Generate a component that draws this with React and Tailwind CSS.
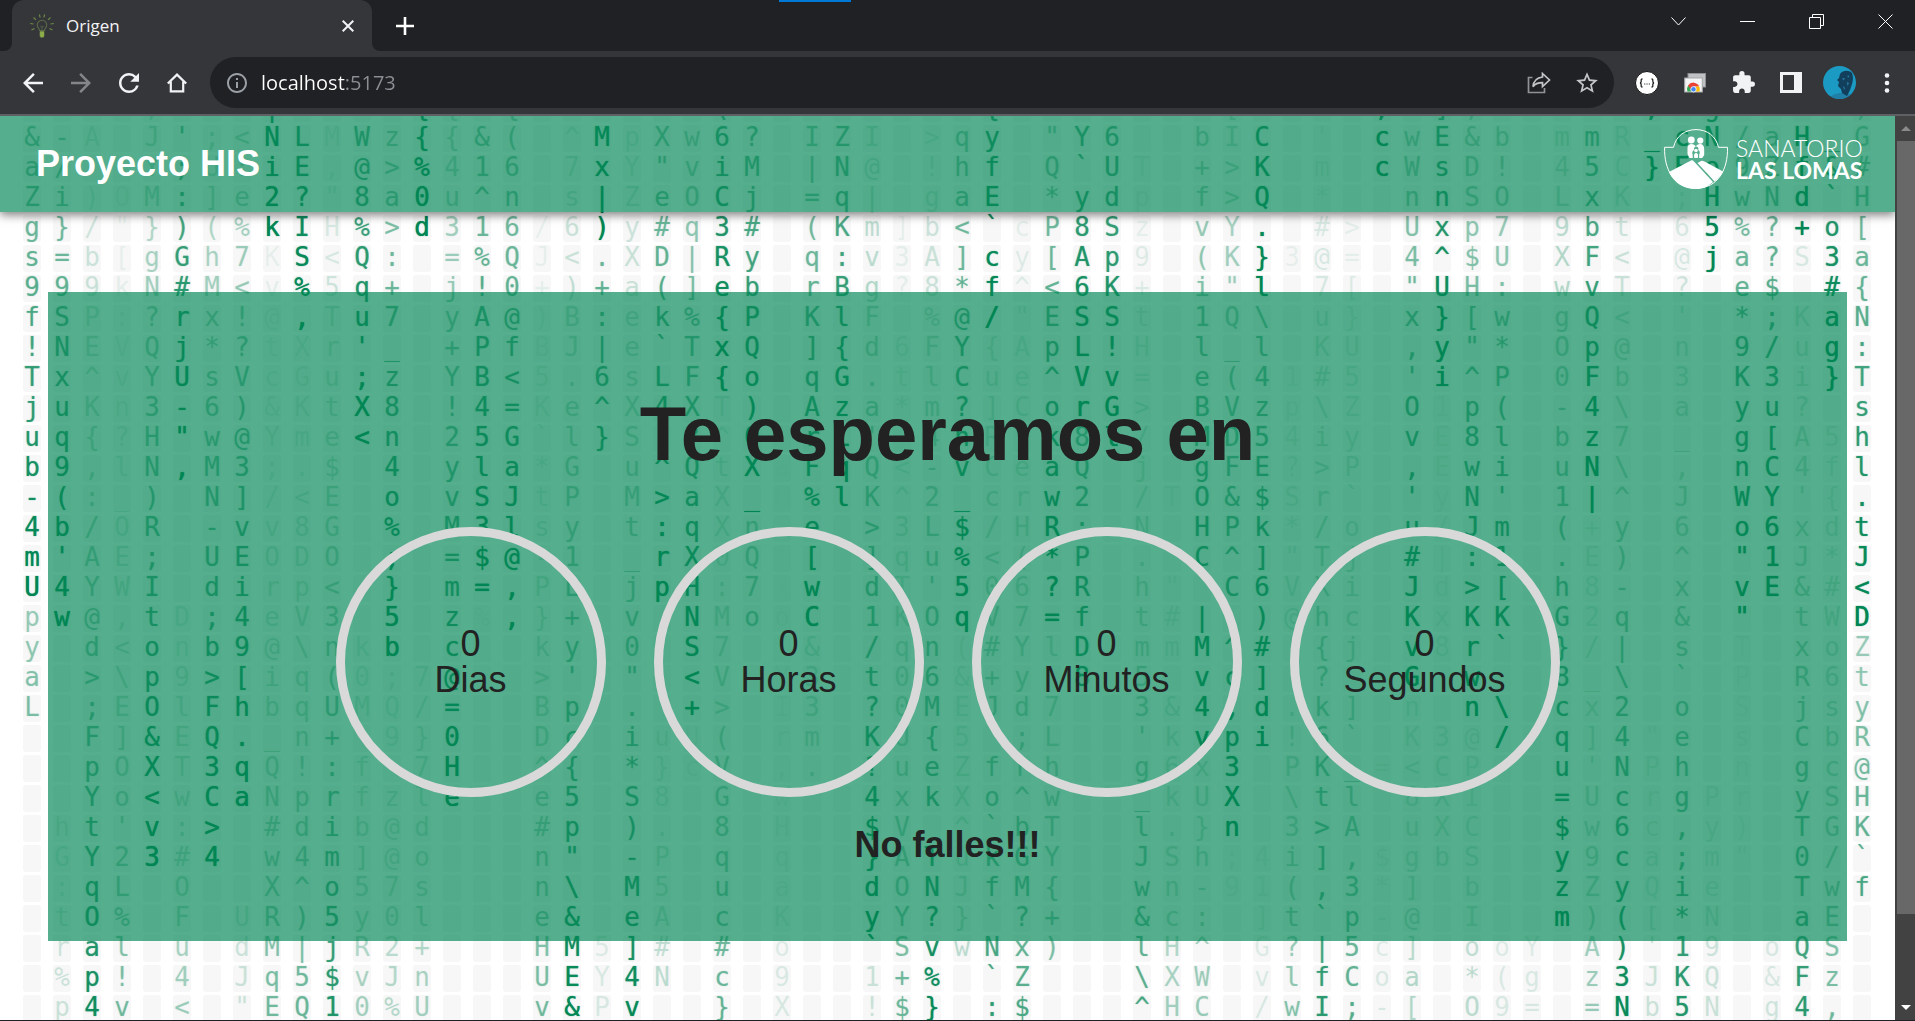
import React from "react";
import { MdArrowBack, MdArrowForward, MdRefresh, MdInfoOutline, MdExtension, MdStarOutline } from "react-icons/md";

// One line per row of the code rain; "~" marks an empty cell.
const RAIN = [
  "~ ~ ~ ~ , ~ ~ ~ | ~ ~ ~ ~ { { ~ { ~ ~ ~ ~ ~ ~ ( ~ ~ ~ ~ ~ ~ ~ ~ { ~ ~ ~ ~ ~ ~ ~ [ ~ ~ ~ ~ , ~ ] , ~ ~ ~ ~ ~ , ~ g ~ ~ ~ ~ )",
  "& - A ~ J ' ; < N L M W z { { & ( ~ ^ M p X w 6 ? ~ I Z I ~ > q y ~ \" Y 6 ~ ~ b I C ~ ' ~ c w E & b ~ m m R _ c N / a H _ G",
  "a / ~ ~ Y ; U : i E , @ > % 4 1 6 ~ 7 x Y \" v i M ~ | N @ ~ ! h f ~ Q ` U T ~ + > K ~ m ~ c W s D ! ~ 4 5 C } E o 9 Z f & #",
  "Z i ) O M : ] e 2 ? \" 8 a 0 u ^ n ~ s | Z e O C j ~ = q | ~ g a E ~ * y d p ~ f > Q ~ * ~ ~ n n S O ~ L x K ~ ; H w N d ` H",
  "g } / \" } ) ( % k I H % > d 3 1 6 / 6 ) y # q 3 # ~ ( K m ] b < ` c P 8 S z ~ v Y . ~ # > ~ U x p 7 ~ 9 b t ~ 6 5 % ? + o [",
  "s = b [ g G h 7 K S < Q : ~ = % Q J < . X D | R y ~ q : v 3 A ] c y [ A p 9 ~ ( K } 3 @ = ~ 4 ^ $ U ~ X F < ~ @ j a ? S 3 a",
  "9 9 9 k N # M < v % 5 q + ~ j ! 0 + ) + a ( ] e b ~ r B g ? 8 * f ^ < 6 K + ~ i \" l ~ 7 [ ~ \" U H : ~ w v T ~ ? ~ e $ ~ # {",
  "f S P : ? r x ! @ , T u 7 ~ y A @ ) B : e k % { P ~ K l F ~ % @ / \" E S S t ~ 1 Q \\ ~ u } ~ x } [ w ~ g Q < ~ ' ~ * ; K a N",
  "! N E V Q j * ? t X r ' _ ~ + P f B J | e ` T x Q ~ ] { d 6 F Y { A p L ! H ~ l _ l ~ K U ~ , y \" * ~ O p @ ~ n ~ 9 / u g :",
  "T x ^ v Y U s V c G u ; z ~ Y B < 5 . 6 s L F { o ~ q G . t l C u e ^ V v = ~ e ( 4 1 # 5 ~ ' i ^ P ~ 0 F b ~ 3 ~ K 3 i } T",
  "j u K n 3 - 6 ) & K t X 8 ~ ! 4 = K e ^ X 4 X T ) ~ A z a * m ? ] C o r G > ~ B V z p \\ Z ~ O 1 p ( ~ - 4 \\ ~ a ~ y u ? ~ s",
  "u q { ? H \" w @ Y m e < n ~ 2 5 G ` l } S - ? ^ 0 ~ r L ' ~ 4 n R ~ k 8 l / ~ M D 5 4 i y ~ v E 8 l ~ b z 7 ~ _ ~ g [ A 5 h",
  "b 9 , l N , M 3 ; . $ ~ 4 ~ y l a * G ~ u ^ Q t X a F q Q < - v C e a Q ~ j ~ g F E ? > P ~ , E w i ~ u N \\ ~ , ~ n C 4 f l",
  "- ( : _ ) ~ N ] / < E ~ o ~ v S J t P ~ M > a X _ M % l K ^ 2 _ c r w 2 ~ / T O & $ S r ` ~ ' y N ' ~ 1 | ^ ~ J ~ W Y ' { .",
  "4 b / O R ~ - v v 8 G ~ % ~ M 3 l s y ~ t : q X n ~ e ~ > 3 L $ / H R : ~ N ~ H P k * / o ~ u / J m ~ ( + y ~ 6 ~ o 6 x d t",
  "m ' A E ; ~ U E O D O ~ ; ~ = $ @ - 1 ~ _ r X 0 Q ' [ ~ ] q u % < ( * P ~ . ~ C ^ ] \" T j ~ # | : 1 ~ . E ) ~ ^ ~ \" 1 J * J",
  "U 4 Y W I ~ d i r p < ~ } ~ m = , P L ~ j p H : 7 x w ~ d T ' 5 0 6 ? R ~ h \" ` C 6 V X i ~ J d > [ ~ h 8 - ~ x ~ v E & # <",
  "p w @ , t D ; 4 e V 3 ~ 5 ~ z % , } + ~ v ~ N M o o C ~ 1 K O q V 7 = f ~ t # | , ) @ h c ~ K x K K ~ G 2 q ~ & ~ \" ~ t W D",
  "y ~ d < o n b 9 @ \\ n k b ~ c ~ ~ k y ~ 0 ~ S 7 ~ ~ & ~ / q n ( # Y l D ~ m m M ^ # ~ { j ~ v 8 r ` ~ } / | ~ s ~ T ~ x o Z",
  "a ~ > \\ p 9 > [ i q ( 0 ; 7 @ ~ ~ > ' ~ \" ~ < V ~ Y 3 ~ t 0 6 & + y ~ 8 ~ 5 ~ v c ] ~ ? ~ ~ G ~ w ~ ~ 8 _ \\ ~ ` ~ P ~ R 6 t",
  "L ~ ; E O l F h b q U M Q / = ~ ~ B p ~ . ~ + > ~ I 3 ~ ? 0 M E J d 7 ~ ~ 3 & 4 , d . k ] ~ n ~ n \\ ~ c x 2 ~ o ~ S ~ j s y",
  "~ ~ F ] & E Q . _ n + ~ 9 } 0 ~ ~ D c ~ i u U ( ~ r m ~ K U { 5 ~ ; L ~ ~ ' k v p i ! 6 ` ~ K 3 @ / ~ q ] 4 \" e ~ s ~ C b R",
  "~ ~ p O X T 3 q Q ! : f ~ 7 H ~ ~ ^ { ~ * } c V ~ , . ~ ? u e Z f r h ~ ~ g 6 x 3 ~ P K _ = < C P ~ ~ u ' N P h ~ n ~ g c @",
  "~ ~ Y o < w C a N p r f z l e ~ ~ e 5 ~ S 8 ~ G ~ w ~ ~ 4 x k X o ^ w ~ ~ _ k U X ~ \\ t l ~ 8 X I ~ ~ = U c r g P r ~ y S H",
  "~ h t ' v : > ~ # d i b @ d ~ ~ ~ # p ~ ) . ~ 8 ~ H ~ ~ $ V ~ ^ ` b T ~ ~ l . } n ~ 3 > A ~ u X C ~ ~ $ w 6 c , y ) ~ T G K",
  "~ G Y 2 3 # 4 ~ w 4 m ] @ o ~ ~ ~ n \" ~ - P ~ q ~ q ~ ~ } A T u k G Y ~ ~ J S h ; 4 i ] , $ g b S ~ ~ y 9 c a ; m \" ~ 0 / `",
  "~ : q L ~ O ~ ~ X ^ o 5 7 s ~ ~ ~ n \\ ~ M 5 ~ u ~ a ~ ~ d O N J f M { ~ ~ w n - 9 1 ( , 3 * ] ~ b ~ ~ z Z y Q i e ~ ~ T w f",
  "~ t O % ~ F ~ U R ) 5 y 0 l ~ ~ ~ e & ~ e A ~ c ~ K ~ ~ y Y ? } ` ? + ~ ~ & c : ~ ] t ` p - @ ~ I ~ ~ m ) ( [ * N ~ ~ a E ~",
  "~ r a l ~ u ~ d M | j R 2 + ~ ~ ~ H M 5 ] # ~ # ~ o ~ ~ ` S v w N x ) ~ ~ l H ^ ~ G ? | 5 c ] ~ o o Y ~ A ) ' 1 9 ~ o Q S ~",
  "~ % p ! ~ 4 ~ J q 5 $ v J n ~ ~ ~ U E Y 4 N ~ c ~ 9 ~ ~ 1 + % ~ ` Z ~ ~ ~ \\ X W ~ v l f C o a ~ * ( g ~ z 3 J K Q ~ & F z ~",
  "~ p 4 v ~ < ~ \" E Q 1 0 % U ~ ~ ~ v & P v ~ ~ } ~ X ~ ~ ! $ } ~ : $ ~ ~ ~ ^ H C ~ / w I ; - [ ~ O 9 = ~ = N b 5 N ~ g 4 , ~",
].map((row) => row.split(" "));

// Rows at which a falling trail is brightest, for each column.
const HEADS = [
  [15, 33], [16, 55], [32], [42], [24, 60], [11, 47], [24, 60], [22, 55], [3, 42], [6, 41],
  [34], [10, 48], [17, 50], [3, 48], [22, 60], [15, 60], [16, 60], [42], [30], [3, 16, 60],
  [31], [15, 52], [19, 60], [8, 40], [12, 31], [60], [16, 43], [12, 60], [27, 55], [41],
  [31], [16, 50], [6, 36], [38], [16, 41], [9, 22], [10, 60], [38], [48], [20, 46],
  [23, 60], [5, 20, 60], [44], [35], [39], [1, 60], [18, 50], [8, 50], [19, 52], [20, 60],
  [60], [26, 60], [12, 46], [31], [1, 55], [1, 34], [4, 55], [16, 60], [15, 58], [3, 35],
  [8, 42], [16, 34],
];

const UNITS = ["Dias", "Horas", "Minutos", "Segundos"];

function brightness(row, col) {
  const head = HEADS[col].find((h) => h >= row);
  return head === undefined ? 0 : Math.pow(0.92, head - row);
}

function CodeRain() {
  return (
    <div aria-hidden="true" className="absolute inset-0 overflow-hidden bg-white">
      <div className="-mt-6 ml-[17px] flex flex-col font-['DejaVu_Sans_Mono',monospace] text-[26px] [text-shadow:0_0_1px_currentColor]">
        {RAIN.map((cells, r) => (
          <div key={r} className="flex">
            {cells.map((ch, c) => (
              <span key={c} className="h-[30px] w-[30px] shrink-0 px-1.5 pt-[3px]">
                <span
                  className="flex h-[27px] justify-center rounded-[3px] bg-[#f7f7f7] leading-6"
                  style={{ color: `rgba(0,134,84,${brightness(r - 1, c).toFixed(2)})` }}
                >
                  {ch === "~" ? "" : ch}
                </span>
              </span>
            ))}
          </div>
        ))}
      </div>
    </div>
  );
}

function Bulb() {
  return (
    <svg viewBox="0 0 24 24" className="size-6 shrink-0" fill="none" stroke="#6d8b47" strokeWidth="1.1">
      <path d="M9.500 16.500c0-2-2.200-2.800-2.200-5.500a4.700 4.700 0 0 1 9.400 0c0 2.700-2.200 3.500-2.200 5.500z" stroke="#5a6b48" />
      <path d="M10.500 12l1.500 1.500 1.500-1.500M12 13.500v3" stroke="#4f5c44" />
      <path d="M10 17.500h4v5l-1 .7h-2l-1-.7z" fill="#8fae4b" stroke="#7d9a45" strokeWidth=".6" />
      <path d="M9.300 .5l.9 3M14.700 .5l-.9 3M3.500 3.500l2.500 2.300M20.500 3.500L18 5.800M.2 9.500l3.300.5M23.800 9.500l-3.300.5M1.500 16l3-1.500M22.500 16l-3-1.500" />
    </svg>
  );
}

function TabStrip() {
  return (
    <div className="flex h-[51px] bg-[#202124]">
      <div className="flex w-3 items-end bg-[#35363a]">
        <div className="h-full w-full rounded-br-lg bg-[#202124]" />
      </div>
      <div className="flex w-[360px] items-center rounded-t-xl bg-[#35363a] pr-[15px] pl-[18px]">
        <Bulb />
        <span className="ml-3 flex-1 text-[17px] leading-6 text-[#f1f3f4]">Origen</span>
        <button aria-label="Cerrar pestaña" className="flex size-[18px] items-center justify-center">
          <svg viewBox="0 0 12 12" className="size-3" stroke="#f1f3f4" strokeWidth="2">
            <path d="M.7 .7l10.600 10.600M11.300 .7L.7 11.300" />
          </svg>
        </button>
      </div>
      <div className="bg-[#35363a]">
        <div className="flex h-full items-center rounded-bl-lg bg-[#202124] pl-6">
          <button aria-label="Nueva pestaña" className="flex size-[18px] items-center justify-center">
            <svg viewBox="0 0 18 18" className="size-[18px]" stroke="#fff" strokeWidth="2.600">
              <path d="M9 0v18M0 9h18" />
            </svg>
          </button>
        </div>
      </div>
      <div className="ml-auto flex h-[43px] text-white">
        <button aria-label="Buscar pestañas" className="flex w-[69px] items-center justify-center">
          <svg viewBox="0 0 15 9" className="h-[9px] w-[15px]" fill="none" stroke="currentColor">
            <path d="M.5 .5l7 7.500 7-7.500" />
          </svg>
        </button>
        <button aria-label="Minimizar" className="flex w-[69px] items-center justify-center">
          <span className="h-px w-[15px] bg-white" />
        </button>
        <button aria-label="Restaurar" className="flex w-[69px] items-center justify-center">
          <svg viewBox="0 0 15 15" className="size-[15px]" fill="none" stroke="currentColor">
            <path d="M.5 3.500h11v11H.5zM3.500 3.500v-3h11v11h-3" />
          </svg>
        </button>
        <button aria-label="Cerrar" className="flex w-16 items-center justify-center pl-1">
          <svg viewBox="0 0 15 15" className="size-[15px]" stroke="currentColor">
            <path d="M.5 .5l14 14M14.500 .5l-14 14" />
          </svg>
        </button>
      </div>
    </div>
  );
}

function ToolButton({ label, children }) {
  return (
    <button aria-label={label} className="flex size-12 shrink-0 items-center justify-center text-[#f1f3f4]">
      {children}
    </button>
  );
}

function Toolbar() {
  return (
    <div className="flex h-[65px] items-center border-b-2 border-[#5f6063] bg-[#35363a] pr-1 pl-[9px]">
      <ToolButton label="Atrás"><MdArrowBack className="size-[30px]" /></ToolButton>
      <ToolButton label="Adelante"><MdArrowForward className="size-[30px] text-[#85868a]" /></ToolButton>
      <ToolButton label="Recargar"><MdRefresh className="size-[30px]" /></ToolButton>
      <ToolButton label="Inicio">
        <svg viewBox="0 0 20 20" className="size-5" fill="none" stroke="currentColor" strokeWidth="2.200">
          <path d="M.8 10.500L10 1.600l9.200 8.900M3.800 8.500v9.800h12.400V8.500" />
        </svg>
      </ToolButton>
      <div className="mx-[9px] flex h-[51px] flex-1 items-center rounded-full bg-[#202124] pr-[3px] pl-[15px]">
        <MdInfoOutline className="size-6 text-[#9aa0a6]" />
        <input
          aria-label="Dirección"
          defaultValue="localhost:5173"
          className="ml-3 h-10 min-w-0 flex-1 bg-[linear-gradient(to_right,#fff_84px,#8b8f94_84px)] bg-clip-text text-[20px] text-transparent outline-none"
        />
        <ToolButton label="Compartir">
          <svg viewBox="0 0 24 22" className="h-[22px] w-6" fill="none" stroke="#c3c5c8" strokeWidth="1.700">
            <path d="M5.500 5.500H1.500v15h16v-4.500" stroke="#8f9296" />
            <path d="M15.500 1.500l7 6.500-7 6.500v-3.800c-4.500 0-7.500 1-9.500 4 .5-5.500 3.500-9 9.500-9.700z" />
          </svg>
        </ToolButton>
        <ToolButton label="Favorito"><MdStarOutline className="size-[26px] text-[#c3c5c8]" /></ToolButton>
      </div>
      <ToolButton label="Formato JSON">
        <svg viewBox="0 0 24 24" className="size-6">
          <circle cx="12" cy="12" r="11.500" fill="#fff" stroke="#111" />
          <path d="M7.500 8c-1.700 0-1.300 1.300-1.300 2.200s-.2 1.800-1.300 1.800c1.100 0 1.300.9 1.300 1.800s-.4 2.200 1.300 2.200M16.500 8c1.700 0 1.300 1.300 1.300 2.200s.2 1.800 1.300 1.800c-1.100 0-1.300.9-1.300 1.800s.4 2.200-1.300 2.200" fill="none" stroke="#222" strokeWidth="1.300" />
          <path d="M9.200 13h1.100M11.500 13h1.100M13.800 13h1.100" stroke="#222" strokeWidth="1.100" />
        </svg>
      </ToolButton>
      <ToolButton label="Escritorio remoto">
        <svg viewBox="0 0 22 20" className="h-5 w-[22px]">
          <rect x="4" y=".5" width="17.500" height="13.500" fill="#bfc1c4" stroke="#8e9094" />
          <rect x=".7" y="5" width="17.600" height="14" fill="#f4f4f4" stroke="#a5a7aa" />
          <path d="M3.500 18.500a6.200 6.200 0 0 1 1-6.200l3.500 4.200v2z" fill="#34a853" />
          <path d="M4 12.600a6.300 6.300 0 0 1 11.200 1H9.500L7.500 17z" fill="#ea4335" />
          <path d="M15.200 13.600a6.300 6.300 0 0 1 .2 4.900H10l2.200-4.900z" fill="#fbbc04" />
          <circle cx="9.500" cy="16.300" r="2.700" fill="#4285f4" stroke="#fff" strokeWidth=".8" />
        </svg>
      </ToolButton>
      <ToolButton label="Extensiones"><MdExtension className="size-[25px]" /></ToolButton>
      <ToolButton label="Panel lateral">
        <svg viewBox="0 0 22 21" className="h-[21px] w-[22px]">
          <path fillRule="evenodd" fill="currentColor" d="M0 0h22v21H0zM3 3v15h11V3z" />
        </svg>
      </ToolButton>
      <ToolButton label="Perfil">
        <svg viewBox="0 0 33 33" className="size-[33px]">
          <defs>
            <clipPath id="avatar"><circle cx="16.500" cy="16.500" r="16.500" /></clipPath>
          </defs>
          <g clipPath="url(#avatar)">
            <path fill="#1b9bc4" d="M0 0h33v33H0z" />
            <path fill="#1f7fa6" d="M6 33c2-4 8-6 12-6l11 1v5z" />
            <path fill="#123f5c" d="M17 8c3-4 9-4 12-1 1.500 4 1 8 0 11l-2 6-3 6-5-3-1-4-3-3 1-4-2-2 2-2z" />
            <path fill="#2a7fa6" d="M19 12l3 .5-1.500 2zM24 16l2 1-1.500 3zM20 20l2 2-1 2zM25 9l1.500 2-2 .5z" />
          </g>
        </svg>
      </ToolButton>
      <ToolButton label="Menú">
        <svg viewBox="0 0 6 20" className="h-5 w-1.5" fill="currentColor">
          <circle cx="3" cy="2.500" r="2.300" /><circle cx="3" cy="10" r="2.300" /><circle cx="3" cy="17.500" r="2.300" />
        </svg>
      </ToolButton>
    </div>
  );
}

function Logo() {
  return (
    <a href="#inicio" aria-label="Sanatorio Las Lomas" className="flex items-center gap-2 text-white">
      <svg viewBox="0 0 64 60" className="h-[60px] w-16" fill="#fff">
        <path d="M9.500 18.300C12 7 21 .6 32 .6s20 6.400 22.500 17.700h9c.6 22-9.500 41-31.500 41S-.1 40.300.6 18.300z" fill="none" stroke="#fff" strokeWidth="1" />
        <path d="M5 43L27 31.500c1.200-.5 2 0 3 1L49 53C44 57.500 38 60 32 60 20 60 10 54 5 43z" />
        <path d="M33.500 34l3.500-2c1-.4 2-.2 3 .3l19 10.200c-2 4-5 7.500-8.500 10z" />
        <circle cx="27.300" cy="11" r="3.400" />
        <circle cx="36.300" cy="11.600" r="3.100" />
        <path d="M23.500 19c0-3 2-4 4-4s3.500 1 4.300 2.500C32.500 16 34 15 36.200 15c2.500 0 4 2 4 5v6l-2 3h-3v-3.500a3 3 0 0 0-1-4.500 2.300 2.300 0 1 0-4 0 3 3 0 0 0-1.500 4.500V29h-3.200l-2-4z" />
        <circle cx="32" cy="21.500" r="1.800" />
        <path d="M30.300 29c-.8-3 0-5 1.700-5s2.700 2 1.800 5z" />
      </svg>
      <span className="flex w-[123px] flex-col font-['Lato',sans-serif] text-[23px] leading-[22px] whitespace-nowrap">
        <span className="font-light">SANATORIO</span>
        <span className="font-bold">LAS LOMAS</span>
      </span>
    </a>
  );
}

function Scrollbar() {
  return (
    <div aria-hidden="true" className="flex w-5 shrink-0 flex-col bg-[#424242] pl-0.5">
      <div className="flex h-[25px] items-center justify-center">
        <span className="border-x-[5px] border-b-[5px] border-x-transparent border-b-[#8a8a8a]" />
      </div>
      <div className="flex-[773] bg-[#686868]" />
      <div className="flex-[81]" />
      <div className="flex h-[25px] items-center justify-center">
        <span className="border-x-[5px] border-t-[5px] border-x-transparent border-t-white" />
      </div>
    </div>
  );
}

export default function App() {
  return (
    <div className="relative flex h-screen flex-col overflow-hidden border-b border-[#202124] font-['Open_Sans',sans-serif]">
      <span className="absolute top-0 left-[779px] h-0.5 w-[72px] bg-[#0078d7]" />
      <TabStrip />
      <Toolbar />
      <div className="flex min-h-0 flex-1">
        <div className="relative min-w-0 flex-1 overflow-hidden font-['Liberation_Sans',Arial,sans-serif] text-[#222]">
          <CodeRain />
          <div className="relative flex flex-col">
            <header className="flex h-24 items-start justify-between bg-[#008654]/[.667] px-9 pt-[13px] shadow-[0_3px_9px_rgba(0,0,0,0.5)]">
              <span className="text-4xl leading-[70px] font-bold text-white">Proyecto HIS</span>
              <Logo />
            </header>
            <main className="mx-12 mt-20 flex flex-col items-center bg-[#008654]/[.667] pt-24 pb-[78px]">
              <h1 className="text-[76px] leading-[92px] font-bold">Te esperamos en</h1>
              <div className="mt-[47px] flex gap-12">
                {UNITS.map((unit) => (
                  <div
                    key={unit}
                    className="flex size-[270px] flex-col items-center justify-center rounded-full border-[9px] border-[#d9d9d9] text-4xl leading-9"
                  >
                    <span>0</span>
                    <span>{unit}</span>
                  </div>
                ))}
              </div>
              <p className="mt-[30px] text-4xl leading-9 font-bold">No falles!!!</p>
            </main>
          </div>
        </div>
        <Scrollbar />
      </div>
    </div>
  );
}
